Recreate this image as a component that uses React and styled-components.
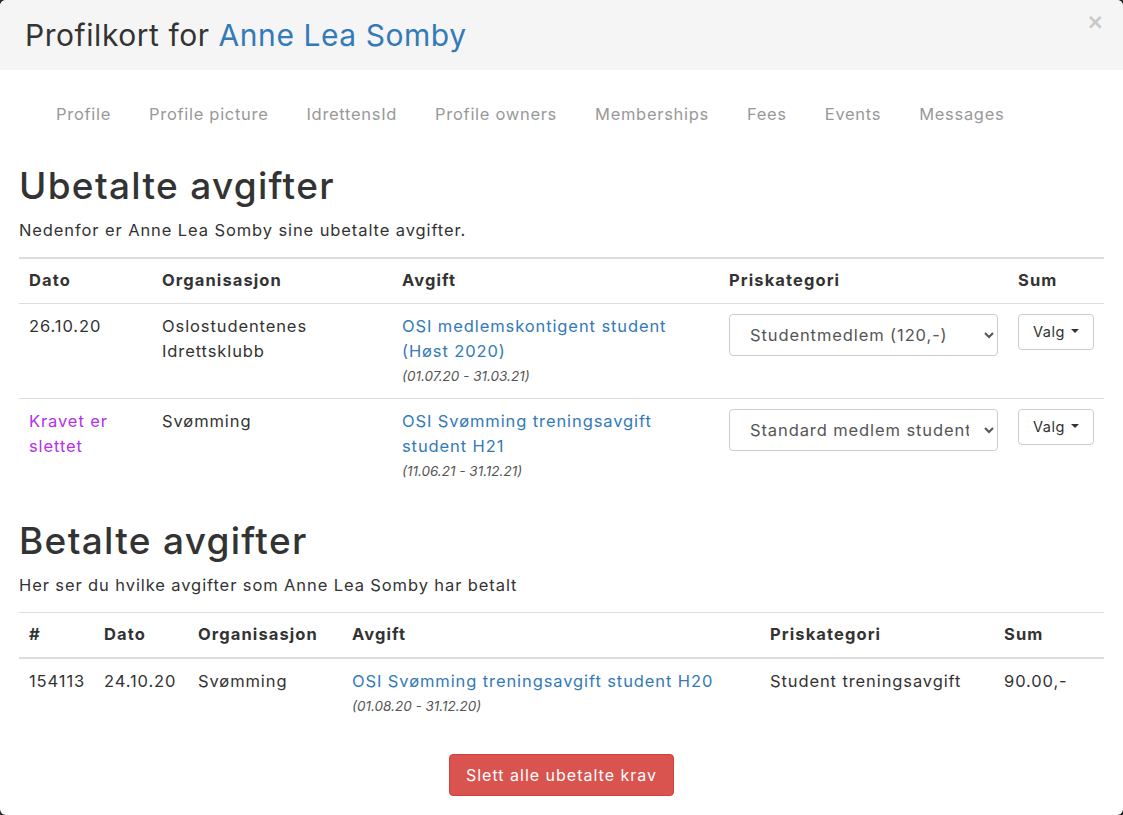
import styled, { createGlobalStyle } from "styled-components";

const GlobalStyle = createGlobalStyle`
  html, body {
    margin: 0;
    padding: 0;
    background: #2b2b2b;
  }
  body {
    font-family: Inter, "Open Sans", sans-serif;
    color: #333;
  }
  * { box-sizing: border-box; }
`;

// modal ramme
const Modal = styled.div`
  width: 1123px;
  height: 815px;
  background: #fff;
  border-radius: 6px;
  overflow: hidden;
  display: flex;
  flex-direction: column;
`;

const Header = styled.div`
  height: 70px;
  background: #f5f5f5;
  display: flex;
  justify-content: space-between;
  align-items: flex-start;
  padding: 0 19px 0 25px;
`;

const Title = styled.h4`
  margin: 0;
  font-size: 30px;
  font-weight: 400;
  line-height: 70px;
  letter-spacing: 0.55px;
  color: #333;
`;

const Link = styled.a`
  color: #337ab7;
  text-decoration: none;
`;

const Close = styled.button`
  border: 0;
  background: none;
  padding: 0;
  margin-top: 12px;
  font-family: "DejaVu Sans", sans-serif;
  font-size: 21px;
  font-weight: bold;
  color: #c8c8c8;
  line-height: 1;
`;

const Body = styled.div`
  padding: 0 19px;
`;

const Nav = styled.ul`
  list-style: none;
  margin: 22px 0 0;
  padding: 0 0 0 18px;
  display: flex;
`;

const NavItem = styled.li`
  padding: 10px 19px;
  font-size: 16.5px;
  line-height: 24px;
  letter-spacing: 0.7px;
  color: #999;
`;

const Heading = styled.h1`
  margin: ${(p) => p.$top}px 0 12px;
  font-size: 37px;
  font-weight: 500;
  line-height: 40px;
  letter-spacing: 1.3px;
  color: #333;
`;

const Lead = styled.p`
  margin: 0 0 14px;
  font-size: 16.5px;
  line-height: 25px;
  letter-spacing: 0.9px;
`;

const Table = styled.table`
  width: 100%;
  border-collapse: collapse;
  table-layout: fixed;
  font-size: 16.5px;
  line-height: 25px;
  letter-spacing: 0.9px;
  border-top: ${(p) => p.$topBorder}px solid #ddd;
`;

const Th = styled.th`
  text-align: left;
  font-weight: 700;
  letter-spacing: 1.1px;
  padding: 9px 10px 10px;
  border-bottom: ${(p) => p.$bottom}px solid #ddd;
`;

const Td = styled.td`
  vertical-align: top;
  padding: 10px;
  border-top: 1px solid #ddd;
  color: ${(p) => (p.$deleted ? "#b530ec" : "#333")};
`;

const Period = styled.em`
  display: block;
  font-size: 13.5px;
  line-height: 24px;
  letter-spacing: 0;
  color: #555;
`;

const Select = styled.select`
  width: 100%;
  height: 42px;
  padding: 0 12px 0 16px;
  font-family: inherit;
  font-size: 16.5px;
  letter-spacing: 0.9px;
  color: #555;
  background: #fff;
  border: 1px solid #ccc;
  border-radius: 4px;
`;

const DropButton = styled.button`
  display: inline-flex;
  align-items: center;
  gap: 6px;
  height: 36px;
  padding: 0 14px 2px 14px;
  font-family: inherit;
  font-size: 14.5px;
  letter-spacing: 0.5px;
  color: #333;
  background: #fff;
  border: 1px solid #ccc;
  border-radius: 4px;
`;

const Caret = styled.span`
  width: 0;
  height: 0;
  border-top: 4px solid #333;
  border-left: 4px solid transparent;
  border-right: 4px solid transparent;
`;

const Footer = styled.div`
  display: flex;
  justify-content: center;
  margin-top: 26px;
`;

const DangerButton = styled.button`
  height: 42px;
  padding: 0 16px;
  font-family: inherit;
  font-size: 16px;
  letter-spacing: 1px;
  color: #fff;
  background: #d9534f;
  border: 1px solid #d43f3a;
  border-radius: 4px;
`;

const tabs = ["Profile", "Profile picture", "IdrettensId", "Profile owners", "Memberships", "Fees", "Events", "Messages"];

const unpaid = [
  {
    date: "26.10.20",
    org: ["Oslostudentenes", "Idrettsklubb"],
    fee: ["OSI medlemskontigent student", "(Høst 2020)"],
    period: "(01.07.20 - 31.03.21)",
    option: "Studentmedlem (120,-)",
  },
  {
    date: ["Kravet er", "slettet"],
    deleted: true,
    org: ["Svømming"],
    fee: ["OSI Svømming treningsavgift", "student H21"],
    period: "(11.06.21 - 31.12.21)",
    option: "Standard medlem student",
  },
];

const lines = (arr) =>
  arr.map((l, i) => (
    <span key={i}>
      {l}
      {i < arr.length - 1 && <br />}
    </span>
  ));

function App() {
  return (
    <>
      <GlobalStyle />
      <Modal>
        <Header>
          <Title>
            Profilkort for <Link>Anne Lea Somby</Link>
          </Title>
          <Close>×</Close>
        </Header>
        <Body>
          <Nav>
            {tabs.map((t) => (
              <NavItem key={t}>{t}</NavItem>
            ))}
          </Nav>

          <Heading $top={30}>Ubetalte avgifter</Heading>
          <Lead>Nedenfor er Anne Lea Somby sine ubetalte avgifter.</Lead>
          <Table $topBorder={2}>
            <colgroup>
              <col style={{ width: 133 }} />
              <col style={{ width: 240 }} />
              <col style={{ width: 327 }} />
              <col style={{ width: 289 }} />
              <col style={{ width: 96 }} />
            </colgroup>
            <thead>
              <tr>
                <Th $bottom={0}>Dato</Th>
                <Th $bottom={0}>Organisasjon</Th>
                <Th $bottom={0}>Avgift</Th>
                <Th $bottom={0}>Priskategori</Th>
                <Th $bottom={0}>Sum</Th>
              </tr>
            </thead>
            <tbody>
              {unpaid.map((r, i) => (
                <tr key={i}>
                  <Td $deleted={r.deleted}>{Array.isArray(r.date) ? lines(r.date) : r.date}</Td>
                  <Td>{lines(r.org)}</Td>
                  <Td>
                    <Link>{lines(r.fee)}</Link>
                    <Period>{r.period}</Period>
                  </Td>
                  <Td>
                    <Select defaultValue={r.option}>
                      <option>{r.option}</option>
                    </Select>
                  </Td>
                  <Td>
                    <DropButton>
                      Valg <Caret />
                    </DropButton>
                  </Td>
                </tr>
              ))}
            </tbody>
          </Table>

          <Heading $top={28}>Betalte avgifter</Heading>
          <Lead>Her ser du hvilke avgifter som Anne Lea Somby har betalt</Lead>
          <Table $topBorder={1}>
            <colgroup>
              <col style={{ width: 75 }} />
              <col style={{ width: 94 }} />
              <col style={{ width: 154 }} />
              <col style={{ width: 418 }} />
              <col style={{ width: 234 }} />
              <col style={{ width: 110 }} />
            </colgroup>
            <thead>
              <tr>
                <Th $bottom={2}>#</Th>
                <Th $bottom={2}>Dato</Th>
                <Th $bottom={2}>Organisasjon</Th>
                <Th $bottom={2}>Avgift</Th>
                <Th $bottom={2}>Priskategori</Th>
                <Th $bottom={2}>Sum</Th>
              </tr>
            </thead>
            <tbody>
              <tr>
                <Td>154113</Td>
                <Td>24.10.20</Td>
                <Td>Svømming</Td>
                <Td>
                  <Link>OSI Svømming treningsavgift student H20</Link>
                  <Period>(01.08.20 - 31.12.20)</Period>
                </Td>
                <Td>Student treningsavgift</Td>
                <Td>90.00,-</Td>
              </tr>
            </tbody>
          </Table>

          <Footer>
            <DangerButton>Slett alle ubetalte krav</DangerButton>
          </Footer>
        </Body>
      </Modal>
    </>
  );
}

export default App;
